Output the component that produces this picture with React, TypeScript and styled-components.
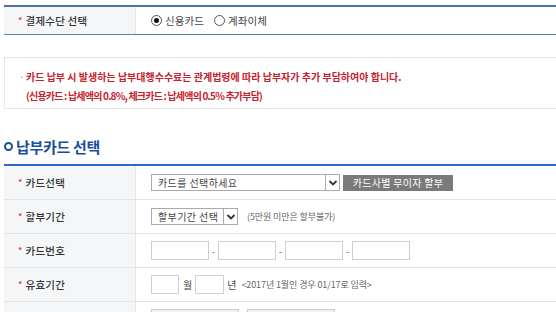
import React from "react";
import styled, { createGlobalStyle } from "styled-components";

const Global = createGlobalStyle`
  html, body { margin: 0; padding: 0; background: #fff; overflow: hidden; }
  body { font-family: "Noto Sans CJK KR", "Noto Sans", sans-serif; color: #333; }
`;

const Page = styled.div`
  width: 640px;
  padding: 5px 0 0 4px;
`;

const Table = styled.div<{ $top: string }>`
  border-top: 2px solid ${(p) => p.$top};
`;

const Row = styled.div<{ $h: number; $line: string }>`
  display: grid;
  grid-template-columns: 132px 1fr;
  height: ${(p) => p.$h}px;
  box-sizing: border-box;
  border-bottom: 1px solid ${(p) => p.$line};
`;

const Label = styled.div`
  background: #f5f6f8;
  border-right: 1px solid #e2e6ec;
  display: flex;
  align-items: center;
  padding-left: 14px;
  font-size: 10.5px;
  letter-spacing: 0.2px;
  color: #333;
  font-weight: 500;
`;

const Star = styled.span`
  color: #d0404f;
  margin-right: 3px;
  font-size: 9px;
`;

const Cell = styled.div`
  display: flex;
  align-items: center;
  padding-left: 15px;
  font-size: 10px;
`;

const RadioGroup = styled.label`
  display: flex;
  align-items: center;
  margin-right: 10px;
  color: #444;
  font-size: 10.5px;
  letter-spacing: 0.1px;
`;

const RadioDot = styled.span<{ $on?: boolean }>`
  width: 9px;
  height: 9px;
  border: 1px solid #555;
  border-radius: 50%;
  margin-right: 3px;
  display: flex;
  align-items: center;
  justify-content: center;
  &::after {
    content: "";
    width: 5px;
    height: 5px;
    border-radius: 50%;
    background: ${(p) => (p.$on ? "#111" : "transparent")};
  }
`;

const Notice = styled.div`
  margin-top: 22px;
  border: 1px solid #e6e6e6;
  border-right: none;
  height: 52px;
  box-sizing: border-box;
  padding: 9px 0 0 14px;
`;

const NoticeLine = styled.div<{ $indent?: boolean; $tight?: boolean }>`
  display: flex;
  align-items: center;
  height: 19px;
  font-size: 10px;
  font-weight: 700;
  letter-spacing: ${(p) => (p.$tight ? -0.8 : 0)}px;
  color: #c8202e;
  padding-left: ${(p) => (p.$indent ? 7 : 0)}px;
`;

const Bullet = styled.span`
  color: #999;
  width: 7px;
  font-weight: 400;
`;

const Heading = styled.h2`
  margin: 27px 0 8px 0;
  display: flex;
  align-items: center;
  font-size: 15px;
  font-weight: 700;
  letter-spacing: -0.3px;
  color: #1b4f9c;
  height: 20px;
`;

const Ring = styled.span`
  width: 5px;
  height: 5px;
  border: 2.5px solid #1b4f9c;
  border-radius: 50%;
  margin-right: 3px;
`;

const SelectBox = styled.div<{ $w: number }>`
  width: ${(p) => p.$w}px;
  height: 17px;
  box-sizing: border-box;
  border: 1px solid #aaa;
  display: flex;
  align-items: center;
  justify-content: space-between;
  padding-left: 6px;
  color: #444;
  font-size: 10px;
  letter-spacing: 0.4px;
  background: #fff;
`;

const Arrow = styled.span`
  width: 14px;
  height: 15px;
  box-sizing: border-box;
  border-left: 1px solid #aaa;
  display: flex;
  align-items: center;
  justify-content: center;
  background: #fff;
`;

const GrayButton = styled.div`
  width: 110px;
  height: 16px;
  margin-left: 3px;
  background: #7a7a7a;
  color: #fff;
  font-size: 10px;
  letter-spacing: 0.3px;
  display: flex;
  align-items: center;
  justify-content: center;
`;

const Hint = styled.span<{ $ml: number }>`
  margin-left: ${(p) => p.$ml}px;
  color: #666;
  font-size: 9px;
  letter-spacing: -0.1px;
`;

const Input = styled.div<{ $w: number; $gray?: boolean }>`
  width: ${(p) => p.$w}px;
  height: 19px;
  box-sizing: border-box;
  border: 1px solid #cfcfcf;
  background: ${(p) => (p.$gray ? "#f1f1f1" : "#fff")};
`;

const Dash = styled.span`
  width: 9px;
  text-align: center;
  color: #777;
  font-size: 10px;
`;

const Unit = styled.span<{ $ml: number; $mr: number }>`
  margin: 0 ${(p) => p.$mr}px 0 ${(p) => p.$ml}px;
  color: #444;
  font-size: 10px;
`;

const PartialRow = styled.div`
  display: grid;
  grid-template-columns: 132px 1fr;
  height: 40px;
`;

const PartialCell = styled.div`
  display: flex;
  gap: 8px;
  padding: 7px 0 0 15px;
`;

const PartialLabel = styled(Label)`
  align-items: flex-start;
  padding-top: 8px;
`;

const Chevron = () => (
  <svg width="10" height="8" viewBox="0 0 10 8">
    <path d="M1.5 2 L5 5.5 L8.5 2" fill="none" stroke="#333" strokeWidth="1.8" />
  </svg>
);

export default function App() {
  return (
    <>
      <Global />
      <Page>
        <Table $top="#4d72a6">
          <Row $h={28} $line="#5a7db0">
            <Label>
              <Star>*</Star>결제수단 선택
            </Label>
            <Cell>
              <RadioGroup>
                <RadioDot $on />
                신용카드
              </RadioGroup>
              <RadioGroup>
                <RadioDot />
                계좌이체
              </RadioGroup>
            </Cell>
          </Row>
        </Table>

        <Notice>
          <NoticeLine>
            <Bullet>·</Bullet>카드 납부 시 발생하는 납부대행수수료는 관계법령에 따라 납부자가 추가 부담하여야 합니다.
          </NoticeLine>
          <NoticeLine $indent $tight>(신용카드 : 납세액의 0.8%, 체크카드 : 납세액의 0.5% 추가부담)</NoticeLine>
        </Notice>

        <Heading>
          <Ring />
          납부카드 선택
        </Heading>

        <Table $top="#2a6bc6">
          <Row $h={34} $line="#e4e4e4">
            <Label>
              <Star>*</Star>카드선택
            </Label>
            <Cell>
              <SelectBox $w={189}>
                카드를 선택하세요
                <Arrow>
                  <Chevron />
                </Arrow>
              </SelectBox>
              <GrayButton>카드사별 무이자 할부</GrayButton>
            </Cell>
          </Row>
          <Row $h={34} $line="#e4e4e4">
            <Label>
              <Star>*</Star>할부기간
            </Label>
            <Cell>
              <SelectBox $w={87}>
                할부기간 선택
                <Arrow>
                  <Chevron />
                </Arrow>
              </SelectBox>
              <Hint $ml={9}>(5만원 미만은 할부불가)</Hint>
            </Cell>
          </Row>
          <Row $h={34} $line="#e4e4e4">
            <Label>
              <Star>*</Star>카드번호
            </Label>
            <Cell>
              <Input $w={58} />
              <Dash>-</Dash>
              <Input $w={58} />
              <Dash>-</Dash>
              <Input $w={58} />
              <Dash>-</Dash>
              <Input $w={58} />
            </Cell>
          </Row>
          <Row $h={34} $line="#e4e4e4">
            <Label>
              <Star>*</Star>유효기간
            </Label>
            <Cell>
              <Input $w={28} />
              <Unit $ml={4} $mr={3}>월</Unit>
              <Input $w={29} />
              <Unit $ml={3} $mr={0}>년</Unit>
              <Hint $ml={5}>&lt;2017년 1월인 경우 01/17로 입력&gt;</Hint>
            </Cell>
          </Row>
          <PartialRow>
            <PartialLabel>
              <Star>*</Star>주민등록번호
            </PartialLabel>
            <PartialCell>
              <Input $w={88} $gray />
              <Input $w={88} $gray />
            </PartialCell>
          </PartialRow>
        </Table>
      </Page>
    </>
  );
}
